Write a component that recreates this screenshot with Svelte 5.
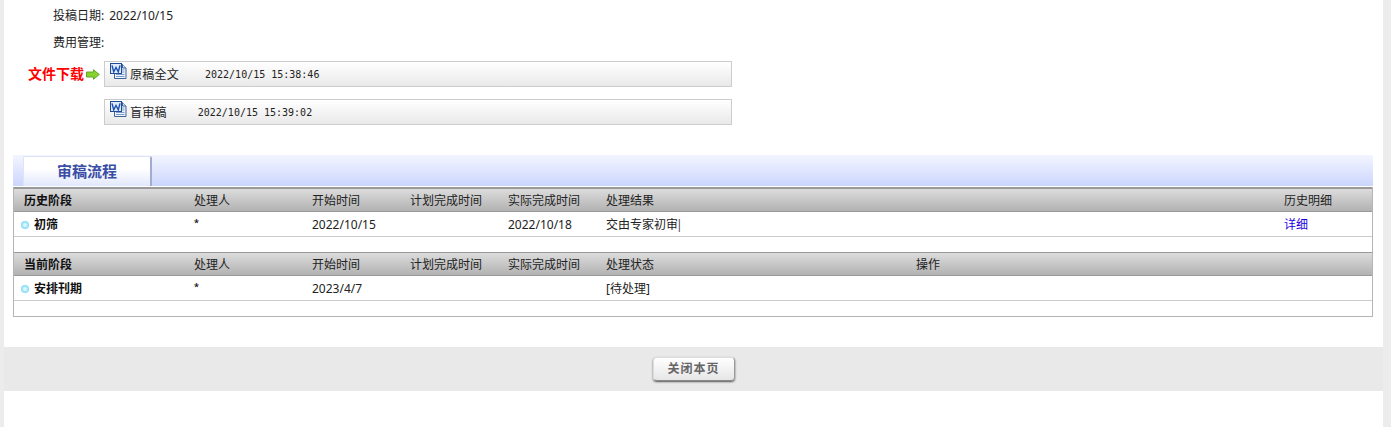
<script>
  const files = [
    { name: '原稿全文', time: '2022/10/15 15:38:46', gap: 'narrow' },
    { name: '盲审稿', time: '2022/10/15 15:39:02', gap: 'wide' }
  ];
</script>

{#snippet word()}
  <svg class="doc" width="17" height="17" viewBox="0 0 17 17" aria-hidden="true">
    <path d="M4.5 1.5H12.5L16 5V15.5H4.5Z" fill="#eef4fc" stroke="#3f6399"/>
    <path d="M12.5 1.5V5H16" fill="#cfe0f5" stroke="#3f6399"/>
    <path d="M12 7H14.5M12 9H14.5M6 11.5H14.5M6 13.5H14.5" stroke="#7f9cc8"/>
    <rect x="0.5" y="0.5" width="11" height="10" fill="#dfeafa" stroke="#1f4a96"/>
    <path d="M2 2.4L3.7 8.8L6 4.4L8.3 8.8L10 2.4" fill="none" stroke="#1d4fb0" stroke-width="1.4"/>
  </svg>
{/snippet}

<div class="page">
  <div class="meta"><span>投稿日期:</span><span class="val">2022/10/15</span></div>
  <div class="meta"><span>费用管理:</span></div>

  <div class="files">
    {#each files as f, i}
      <div class="file-row">
        <div class="file-label">
          {#if i === 0}
            <b>文件下载</b>
            <svg width="14" height="11" viewBox="0 0 14 11" aria-hidden="true">
              <path d="M0.5 3H7.5V0.7L13.3 5.5L7.5 10.3V8H0.5Z" fill="#86d22e" stroke="#6aa02c"/>
            </svg>
          {/if}
        </div>
        <div class="file-box">
          {@render word()}
          <span class="fname">{f.name}</span>
          <span class="ftime {f.gap}">{f.time}</span>
        </div>
      </div>
    {/each}
  </div>

  <div class="tabbar"><div class="tab">审稿流程</div></div>

  <div class="flow">
    <div class="row head">
      <span class="first">历史阶段</span><span>处理人</span><span>开始时间</span><span>计划完成时间</span><span>实际完成时间</span><span>处理结果</span><span></span><span>历史明细</span>
    </div>
    <div class="row body">
      <span class="first stage"><i></i>初筛</span><span class="star">*</span><span>2022/10/15</span><span></span><span>2022/10/18</span><span>交由专家初审<em>|</em></span><span></span><span class="link">详细</span>
    </div>
    <div class="blank"></div>
    <div class="row head second">
      <span class="first">当前阶段</span><span>处理人</span><span>开始时间</span><span>计划完成时间</span><span>实际完成时间</span><span>处理状态</span><span>操作</span><span></span>
    </div>
    <div class="row body">
      <span class="first stage"><i></i>安排刊期</span><span class="star">*</span><span>2023/4/7</span><span></span><span></span><span>[待处理]</span><span></span><span></span>
    </div>
    <div class="blank"></div>
  </div>

  <div class="footer"><button>关闭本页</button></div>
</div>

<style>
  :global(body) {
    background: #ececec;
  }
  .page {
    box-sizing: border-box;
    width: 1379px;
    height: 427px;
    margin-left: 4px;
    padding-top: 2px;
    background: #fff;
    color: #222;
    font: 12px/1 "Noto Sans", "Noto Sans CJK SC", sans-serif;
    overflow: hidden;
  }
  .meta {
    display: flex;
    align-items: center;
    height: 27px;
    padding-left: 49px;
    gap: 5px;
  }
  .files {
    display: flex;
    flex-direction: column;
    gap: 12px;
    margin-top: 5px;
  }
  .file-row {
    display: flex;
    align-items: stretch;
  }
  .file-label {
    box-sizing: border-box;
    width: 100px;
    display: flex;
    align-items: center;
    justify-content: flex-end;
    gap: 2px;
    padding-right: 4px;
  }
  .file-label b {
    color: #f00;
    font-size: 14px;
    font-weight: 700;
  }
  .file-box {
    box-sizing: border-box;
    width: 628px;
    height: 26px;
    display: flex;
    align-items: center;
    padding-left: 5px;
    border: 1px solid #ccc;
    background: linear-gradient(#fff, #e9e9e9);
  }
  .doc {
    margin-top: -6px;
    margin-right: 3px;
    flex: none;
  }
  .fname {
    padding-top: 1px;
    letter-spacing: 0.25px;
  }
  .ftime {
    padding-top: 1px;
    font: 10px/1 "DejaVu Sans Mono", monospace;
    color: #222;
  }
  .ftime.narrow {
    margin-left: 26px;
  }
  .ftime.wide {
    margin-left: 31px;
  }
  .tabbar {
    box-sizing: border-box;
    display: flex;
    align-items: flex-end;
    width: 1360px;
    height: 31px;
    margin: 30px 0 0 9px;
    padding-left: 10px;
    background: linear-gradient(#f3f5ff, #cbd6fd);
  }
  .tab {
    box-sizing: border-box;
    width: 129px;
    height: 30px;
    padding-bottom: 1px;
    display: flex;
    align-items: center;
    justify-content: center;
    background: linear-gradient(#fff 40%, #e2e8fd);
    border-top: 1px solid #dfe3f6;
    border-left: 1px solid #dfe3f6;
    border-right: 2px solid #a3acd0;
    border-radius: 2px 2px 0 0;
    color: #3a4ea6;
    font-size: 15px;
    font-weight: 700;
  }
  .flow {
    box-sizing: border-box;
    width: 1360px;
    margin: 1px 0 0 9px;
    border: 1px solid #b4b4b4;
    border-top: 0;
  }
  .row {
    display: grid;
    grid-template-columns: 180px 118px 98px 98px 98px 310px 368px 1fr;
    align-items: center;
  }
  .head {
    box-sizing: border-box;
    height: 25px;
    padding-top: 1px;
    border-top: 2px solid #999;
    border-bottom: 1px solid #999;
    background: linear-gradient(#dcdcdc, #b2b2b2);
  }
  .head.second {
    height: 24px;
    padding-top: 2px;
    border-top-width: 1px;
  }
  .head .first {
    font-weight: 700;
    padding-left: 10px;
    color: #111;
  }
  .body {
    box-sizing: border-box;
    height: 25px;
    padding-top: 2px;
    border-bottom: 1px solid #ccc;
  }
  .stage {
    display: flex;
    align-items: center;
    gap: 5px;
    padding-left: 7px;
    font-weight: 700;
    color: #111;
  }
  .stage i {
    width: 8px;
    height: 8px;
    margin-top: -1px;
    border-radius: 50%;
    background: radial-gradient(#dff9ff 15%, #66d0f0 85%);
  }
  .star {
    font-size: 9px;
    font-weight: 700;
    margin-top: -5px;
  }
  em {
    font-style: normal;
    color: #445;
    margin-left: -2px;
  }
  .link {
    color: #1a00e0;
  }
  .blank {
    height: 15px;
  }
  .footer {
    display: flex;
    justify-content: center;
    align-items: center;
    height: 44px;
    margin-top: 30px;
    background: #e9e9e9;
  }
  button {
    box-sizing: border-box;
    width: 82px;
    height: 24px;
    padding: 0;
    border: 1px solid #ddd;
    border-bottom-color: #888;
    border-right-color: #999;
    border-radius: 4px;
    background: linear-gradient(#fff, #e6e6e6);
    box-shadow: 0 1px 2px #555;
    color: #666;
    font: 700 12px/1 "Noto Sans", "Noto Sans CJK SC", sans-serif;
    letter-spacing: 1px;
  }
</style>
